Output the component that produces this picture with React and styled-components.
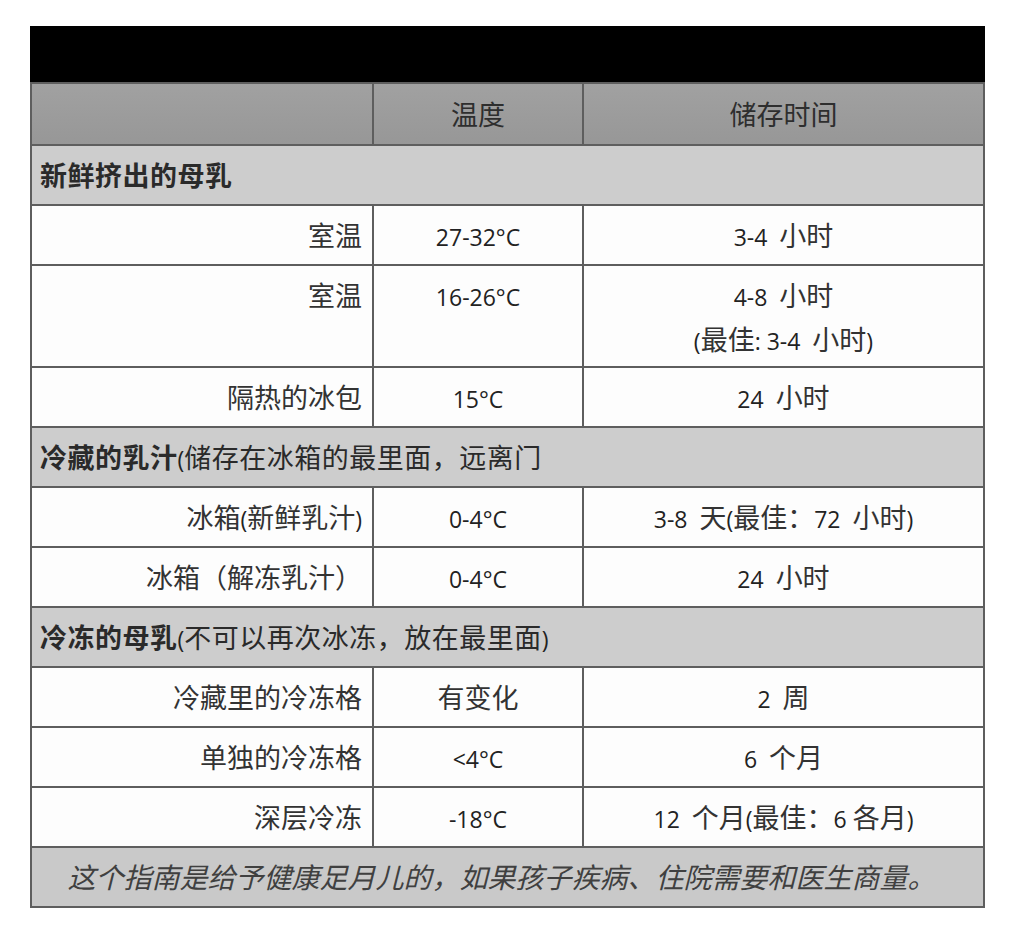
import React from "react";
import styled, { createGlobalStyle } from "styled-components";

const Global = createGlobalStyle`
  html, body { margin: 0; padding: 0; background: #ffffff; }
  body { font-family: "Noto Sans CJK SC", "Noto Sans", sans-serif; }
`;

const Page = styled.div`
  padding: 26px 0 0 30px;
  width: 1022px;
  height: 930px;
  box-sizing: border-box;
`;

const Table = styled.div`
  width: 955px;
  box-sizing: border-box;
  display: grid;
  grid-template-columns: 340px 208px 399px;
  gap: 2px;
  padding: 0 2px 2px 2px;
  background: #5e5e5e;
  color: #333333;
  font-size: 27px;
`;

const TitleBar = styled.div`
  grid-column: 1 / -1;
  height: 56px;
  margin: 0 -2px;
  background: #000000;
`;

const Cell = styled.div`
  box-sizing: border-box;
  height: ${(p) => p.$h || 58}px;
  padding: 8px ${(p) => (p.$align === "right" ? "10px" : "8px")} 0 8px;
  line-height: 41px;
  text-align: ${(p) => p.$align || "center"};
  white-space: pre-wrap;
  background: ${(p) => p.$bg || "#fdfdfd"};
`;

const HeadCell = styled(Cell)`
  height: 60px;
  padding-top: 9px;
  background: linear-gradient(#a1a1a1, #979797);
  color: #2e2e2e;
`;

const SectionRow = styled(Cell)`
  grid-column: 1 / -1;
  text-align: left;
  background: #cdcdcd;
  color: #2a2a2a;
  letter-spacing: 0.5px;
`;

const Strong = styled.span`
  font-weight: 700;
`;

const Footer = styled(Cell)`
  grid-column: 1 / -1;
  background: #c9c9c9;
  color: #404040;
  font-style: italic;
  font-size: 28px;
  text-align: center;
  padding-left: 0;
  padding-right: 12px;
`;

const Latin = styled.span`
  font-family: "Open Sans", "Noto Sans", sans-serif;
  font-size: 23px;
  color: #222222;
  letter-spacing: 0;
`;

const mixed = (s) =>
  s
    .split(/([\x20-\x7E°]+)/)
    .filter(Boolean)
    .map((part, i) =>
      /^[\x20-\x7E°]+$/.test(part) ? (
        <Latin key={i}>{part}</Latin>
      ) : (
        <span key={i}>{part}</span>
      )
    );

const sections = [
  {
    title: "新鲜挤出的母乳",
    note: "",
    rows: [
      ["室温", "27-32°C", "3-4  小时"],
      ["室温", "16-26°C", "4-8  小时\n(最佳: 3-4  小时)", 100],
      ["隔热的冰包", "15°C", "24  小时"],
    ],
  },
  {
    title: "冷藏的乳汁",
    note: "(储存在冰箱的最里面，远离门",
    rows: [
      ["冰箱(新鲜乳汁)", "0-4°C", "3-8  天(最佳：72  小时)"],
      ["冰箱（解冻乳汁）", "0-4°C", "24  小时"],
    ],
  },
  {
    title: "冷冻的母乳",
    note: "(不可以再次冰冻，放在最里面)",
    rows: [
      ["冷藏里的冷冻格", "有变化", "2  周"],
      ["单独的冷冻格", "<4°C", "6  个月"],
      ["深层冷冻", "-18°C", "12  个月(最佳：6 各月)"],
    ],
  },
];

export default function App() {
  return (
    <Page>
      <Global />
      <Table>
        <TitleBar />
        <HeadCell />
        <HeadCell>温度</HeadCell>
        <HeadCell>储存时间</HeadCell>
        {sections.map((sec) => (
          <React.Fragment key={sec.title}>
            <SectionRow>
              <Strong>{sec.title}</Strong>
              {mixed(sec.note)}
            </SectionRow>
            {sec.rows.map(([label, temp, time, h], i) => (
              <React.Fragment key={i}>
                <Cell $align="right" $h={h}>{mixed(label)}</Cell>
                <Cell $h={h}>{mixed(temp)}</Cell>
                <Cell $h={h}>{mixed(time)}</Cell>
              </React.Fragment>
            ))}
          </React.Fragment>
        ))}
        <Footer>这个指南是给予健康足月儿的，如果孩子疾病、住院需要和医生商量。</Footer>
      </Table>
    </Page>
  );
}
